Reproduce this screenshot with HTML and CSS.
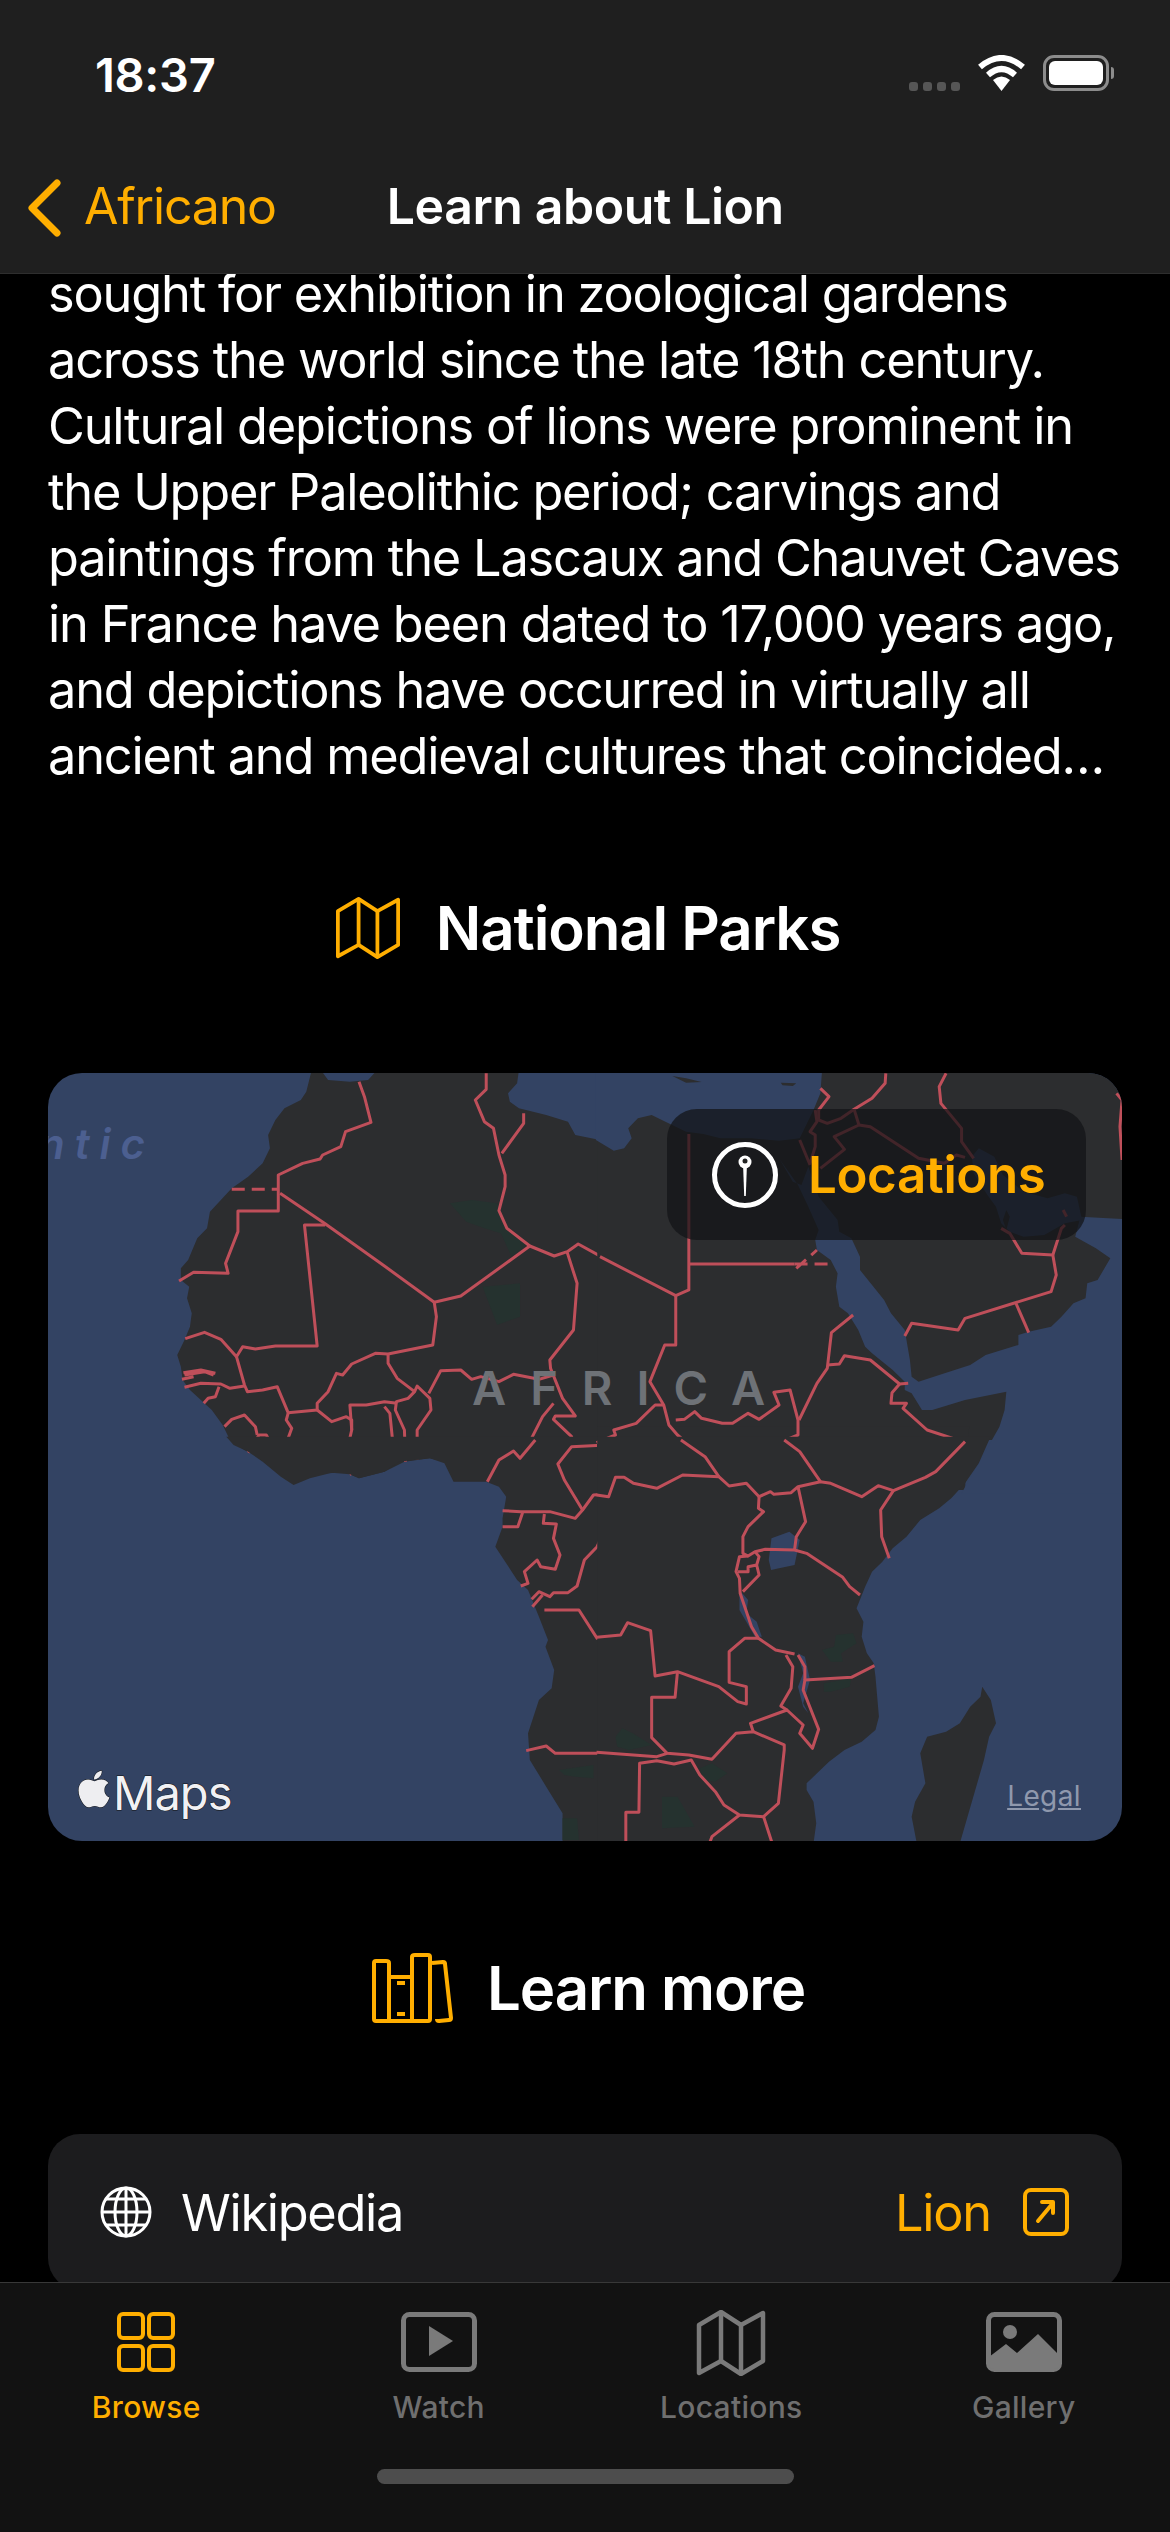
FILE: index.html
```html
<!DOCTYPE html>
<html lang="en">
<head>
<meta charset="utf-8">
<title>Learn about Lion</title>
<link rel="stylesheet" href="styles.css">
</head>
<body>
<div class="phone">
  <header class="topbar">
    <div class="status">
      <span class="time">18:37</span>
      <div class="status-icons">
        <div class="cell"><i></i><i></i><i></i><i></i></div>
        <svg class="wifi" viewBox="0 0 49 36"><path class="wifi-arc" d="M3 12Q24.500-6 46 12"/><path class="wifi-arc" d="M11 20Q24.500 8 38 20"/><path class="wifi-tip" d="M16 25Q24.500 18 33 25L24.500 36Z"/></svg>
        <div class="battery"><div class="battery-fill"></div></div>
      </div>
    </div>
    <nav class="navbar">
      <svg class="chevron" viewBox="0 0 34 58"><path d="M30 4L5 29L30 54"/></svg>
      <span class="back">Africano</span>
      <span class="title">Learn about Lion</span>
    </nav>
  </header>

  <main class="scroll">
    <p class="body-text">sought for exhibition in zoological gardens<br>across the world since the late 18th century.<br>Cultural depictions of lions were prominent in<br>the Upper Paleolithic period; carvings and<br>paintings from the Lascaux and Chauvet Caves<br>in France have been dated to 17,000 years ago,<br>and depictions have occurred in virtually all<br>ancient and medieval cultures that coincided…</p>

    <h2 class="section-head parks-head">
      <svg class="icon-map" viewBox="0 0 68 66"><path d="M2 15L24 2L44 15L66 3V51L44 64L24 51L2 63Z"/><path d="M24 2V51M44 15V64"/></svg>
      <span>National Parks</span>
    </h2>

    <section class="map">
      <svg class="map-svg" viewBox="48 1073 1074 768">
        <rect class="water" x="48" y="1073" width="1074" height="768"/>
        <!-- north west -->
        <g transform="translate(30 1060) scale(.36352 .33333)">
          <path class="land" d="M775 30L760 95L745 120L700 145L675 180L655 225L660 265L640 310L600 350L555 385L525 420L495 455L487 505L460 535L435 600L415 625L415 660L438 680L432 715L445 760L440 800L425 840L405 885L415 920L420 960L440 990L470 1020L500 1050L530 1095L550 1140L590 1170L640 1195L690 1225L725 1240L750 1255L800 1240L870 1238L905 1255L975 1235L1030 1205L1100 1195L1140 1205L1165 1260L1585 1260L1585 246L1568 240L1500 225L1480 185L1420 165L1345 145L1320 125L1315 100L1340 70L1345 30L955 30L930 60L880 65L820 60L800 30Z"/>
          <path class="park" d="M1155 430L1215 420L1285 430L1310 500L1365 555L1325 590L1295 520L1250 505L1200 485Z"/>
          <path class="park" d="M1245 680L1348 670L1348 770L1285 795Z"/>
          <path class="border" d="M905 65L920 110L938 187L868 215L855 260L805 285L798 297L750 310L683 345L683 453L572 453L572 515L538 610L545 640L450 637L410 663"/>
          <path class="border dash" d="M555 388L685 388"/>
          <path class="border" d="M688 400L810 490L975 618L1112 727L1185 708L1375 558L1312 505L1290 452L1307 380L1307 345L1290 285L1275 205L1250 185L1225 120L1255 88L1255 40"/>
          <path class="border" d="M1298 280L1358 190L1358 160"/>
          <path class="border" d="M812 495L755 495L790 858L675 858L620 867L585 860L568 890L525 838L480 817L427 836"/>
          <path class="border" d="M1112 727L1118 770L1108 855L985 882L950 880L885 912L860 945L843 940L820 995L790 1030L790 1050L710 1058L680 980L640 990L598 995L590 975L568 890"/>
          <path class="border" d="M1375 558L1442 588L1478 575L1508 552L1585 598"/>
          <path class="border" d="M1478 578L1505 670L1495 810L1430 900L1432 925L1465 1015L1500 1068L1445 1068L1440 1078L1490 1130L1495 1160L1585 1160"/>
          <path class="border" d="M1097 1000L1130 932L1185 930L1215 958L1240 950L1290 965L1330 943L1400 958L1440 945"/>
          <path class="border" d="M985 885L985 910L1010 955L1058 995L1065 978L1100 1015L1103 1050L1065 1110L1065 1198"/>
          <path class="border" d="M1058 995L1040 1015L1008 1025L1005 1050L1030 1110L1033 1205"/>
          <path class="border" d="M1010 1030L975 1025L925 1035L880 1035L885 1110L865 1205L885 1245"/>
          <path class="border" d="M975 1040L990 1060L1000 1170L1010 1205"/>
          <path class="border" d="M790 1050L830 1085L870 1070L885 1080L885 1110"/>
          <path class="border" d="M710 1060L705 1080L720 1105L705 1150L670 1165L650 1125L630 1125L600 1178"/>
          <path class="border" d="M535 1100L555 1078L590 1065L620 1100L625 1125"/>
          <path class="border" d="M690 1165L695 1195L725 1225L720 1260"/>
          <path class="border" d="M425 982L470 970L525 972L550 985L590 978"/>
          <path class="border" d="M418 958L450 950M422 938L470 930L510 940M425 945L480 935L505 945"/>
          <path class="border" d="M520 980L510 1010L490 1015L478 1030"/>
          <path class="border" d="M1440 1030L1410 1070L1375 1145L1345 1195L1330 1175L1290 1205L1260 1260"/>
          <path class="border" d="M1495 1160L1452 1210L1465 1260"/>
        </g>
        <!-- south west -->
        <g transform="translate(30 1440) scale(.36352 .33333)">
          <path class="land" d="M540-10L560 15L600 35L640 65L690 110L725 135L770 115L830 98L880 103L905 115L975 95L1015 65L1100 55L1140 70L1165 125L1255 125L1290 140L1310 170L1300 235L1300 260L1280 320L1340 420L1370 450L1400 530L1425 600L1418 620L1442 690L1435 745L1400 780L1370 880L1375 960L1420 1040L1465 1120L1465 1210L1585 1210L1585-10Z"/>
          <path class="park" d="M1455 990L1550 975L1550 1015L1500 1010L1470 1005Z"/>
          <path class="park" d="M1465 1135L1505 1135L1510 1200L1465 1200Z"/>
          <path class="border" d="M1300 212L1350 215L1430 215L1500 235L1520 210L1550 165L1585 162"/>
          <path class="border" d="M1520 210L1470 120L1452 72L1490 20L1585 15"/>
          <path class="border" d="M1258 125L1290 60L1330 33L1348 55L1390 0"/>
          <path class="border" d="M1355 218L1342 260L1300 260"/>
          <path class="border" d="M1415 222L1412 250L1448 252L1440 295L1458 345L1445 388L1405 380L1395 360L1360 395L1370 430L1350 438"/>
          <path class="border" d="M1380 478L1400 455L1430 470L1440 458L1480 458L1505 438L1525 360L1560 320L1585 260"/>
          <path class="border" d="M1382 500L1410 465"/>
          <path class="border" d="M1415 510L1510 510L1560 595L1585 595"/>
          <path class="border" d="M1365 932L1420 918L1445 940L1585 940"/>
        </g>
        <!-- north east -->
        <g transform="translate(600 1060) scale(.34435 .33333)">
          <path class="land" d="M-8 30H1532V1140H1070L-8 1262Z"/>
          <path class="land" d="M-8 1100H1072L1060 1290H-8Z"/>
          <path class="water" d="M-12 30L-12 240L40 272L70 265L92 235L82 205L110 175L150 165L190 185L250 215L300 222L350 235L440 235L520 242L580 235L620 150L640 100L645 30Z"/>
          <path class="water" d="M520 295L560 365L585 375L605 320L635 410L690 480L695 515L730 535L755 590L755 630L790 675L825 720L845 760L885 810L900 900L905 950L925 965L985 945L1075 915L1120 885L1215 855L1215 825L1245 815L1310 800L1340 770L1375 730L1410 715L1415 670L1445 660L1482 595L1440 565L1380 530L1395 470L1540 478L1540 1300L1050 1300L1070 1262L1100 1210L1160 1100L1175 1050L1180 995L1060 1020L965 1050L935 1050L905 1000L885 990L885 965L850 930L790 880L770 860L750 810L720 760L695 740L685 680L690 640L670 600L630 570L625 540L635 510L605 440L575 375L530 310Z"/>
          <path class="water" d="M1080 290L1100 265L1145 290L1170 345L1230 395L1300 415L1350 400L1385 410L1400 480L1350 490L1290 525L1230 530L1190 515L1165 490L1150 440L1125 405L1085 340Z"/>
          <path class="land" d="M210 48L250 55L295 66L250 68ZM525 68L570 70L560 78L530 76Z"/>
          <path class="land" d="M1170 480L1180 450L1190 470L1180 510Z"/>
          <path class="border" d="M258 222L258 690L220 707L0 590"/>
          <path class="border" d="M258 612L565 612"/>
          <path class="border dash" d="M565 612L675 612M570 625L630 570"/>
          <path class="border" d="M220 707L220 855L188 855L145 965L185 1035L200 1095L225 1125L305 1195L350 1262"/>
          <path class="border" d="M185 1035L160 1035L105 1090L40 1110L45 1125L-10 1148"/>
          <path class="border" d="M220 1080L245 1078L275 1055L295 1075L355 1090L385 1090L430 1060L462 1078L520 1035L505 997L552 990L575 1080L575 1125L540 1140L580 1170L640 1262"/>
          <path class="border" d="M578 1080L630 970L660 925L672 818L735 765"/>
          <path class="border" d="M660 915L695 912L710 887L785 900L870 972L895 970"/>
          <path class="border" d="M870 972L848 998L845 1030L890 1030L880 1045L950 1110L1060 1147L975 1235L880 1265"/>
          <path class="border" d="M640 85L665 110L635 150L635 180L660 190L700 175L738 148L790 115L828 70L830 40"/>
          <path class="border" d="M738 148L752 195L680 230L710 268L640 325"/>
          <path class="border" d="M752 195L785 200L925 295L1000 310L1035 285L1060 292"/>
          <path class="border" d="M1005 40L985 80L990 130L1050 205L1050 245L1085 295"/>
          <path class="border" d="M625 150L630 185L610 215L625 225L625 260L610 310M580 240L610 315"/>
          <path class="border" d="M1165 505L1190 520L1225 580L1315 585L1325 645L1310 695L1060 775L1040 810L905 790L885 828"/>
          <path class="border" d="M1315 585L1340 505L1350 495M1345 450L1355 470"/>
          <path class="border" d="M1208 730L1245 818"/>
          <path class="border" d="M1516 300L1510 200L1516 120L1500 100"/>
        </g>
        <!-- south east -->
        <g transform="translate(600 1440) scale(.34435 .33333)">
          <path class="land" d="M-8-10L1134-10L1130 0L1100 70L1060 130L1020 175L985 205L930 240L890 290L850 325L820 365L790 395L770 440L745 505L765 545L760 590L775 640L795 670L800 710L805 770L810 830L800 870L760 905L710 930L665 965L640 990L600 1030L600 1050L620 1085L628 1150L620 1210L-8 1210Z"/>
          <path class="land" d="M1110 740L1135 780L1150 850L1130 890L1115 960L1045 1210L920 1210L905 1130L915 1085L945 1030L930 940L950 890L1005 875L1045 850L1075 800L1105 770Z"/>
          <path class="water" d="M498 295L550 275L580 300L565 375L520 385L497 390L490 360Z"/>
          <path class="water" d="M405 450L430 480L425 520L455 545L470 590L450 590L425 545L405 510Z"/>
          <path class="water" d="M575 640L595 650L610 720L590 790L605 820L590 800L575 740L590 700Z"/>
          <path class="park" d="M645 630L680 620L685 585L735 580L745 610L700 640L705 665L670 665Z"/>
          <path class="park" d="M650 730L730 715L725 740L670 755L650 755Z"/>
          <path class="park" d="M45 890L65 865L95 880L150 915L85 930L50 920Z"/>
          <path class="park" d="M290 985L325 970L370 1000L335 1025L300 1020Z"/>
          <path class="park" d="M180 1070L225 1070L275 1160L180 1165Z"/>
          <path class="border" d="M-10 165L25 170L45 112L70 112L97 130L165 145L240 105L345 110L375 138L425 130L462 170L495 155L505 163L555 158L575 140L640 125L670 130L760 170L808 137L852 152L945 112L975 95L1060 5"/>
          <path class="border" d="M235 0L305 50L345 110M535 0L580 35L640 125"/>
          <path class="border" d="M575 140L597 245L570 290L565 330"/>
          <path class="border" d="M852 152L815 210L818 290L840 355"/>
          <path class="border" d="M462 170L460 205L475 215L430 260L415 290L415 340L430 348L450 335L480 328L565 330L600 340L705 412L725 440L755 465"/>
          <path class="border" d="M430 348L405 350L395 395L405 415L407 460L440 560L460 595L510 630L565 642"/>
          <path class="border" d="M450 335L462 350L455 375L430 380L430 395L400 395M455 375L462 405L415 455"/>
          <path class="border" d="M460 595L420 595L375 635L375 727L425 740L425 792L400 785L345 740L225 695L160 708L147 572L80 548L60 585L-10 592"/>
          <path class="border" d="M225 695L218 772L150 772L150 893L195 940L258 945L325 958L395 880L445 875L535 915L535 930L518 1090L475 1130L405 1125L360 1095L335 1055L290 1005L265 960L215 972L165 962L115 970L113 1117L75 1117L75 1210"/>
          <path class="border" d="M-10 937L165 950L195 940"/>
          <path class="border" d="M445 875L437 850L543 810L590 855L580 880L617 925L635 868L590 750L595 720L730 712L797 677"/>
          <path class="border" d="M595 720L595 680L575 645"/>
          <path class="border" d="M543 810L525 798L555 745L560 680L540 645"/>
          <path class="border" d="M405 1125L325 1190L318 1210M475 1130L500 1210"/>
        </g>
        <text class="ocean-label" x="155" y="1159" text-anchor="end">Atlantic</text>
        <text class="continent-label" x="472" y="1405">AFRICA</text>
      </svg>

      <div class="locations-btn">
        <svg class="pin" viewBox="0 0 68 68"><circle class="pin-ring" cx="34" cy="34" r="30.500"/><path class="pin-stem" d="M32 22H36L34.800 55H33.200Z"/><circle class="pin-head" cx="34" cy="21" r="6.500"/><circle class="pin-hole" cx="34" cy="20" r="2.500"/></svg>
        <span>Locations</span>
      </div>

      <div class="maps-mark">
        <svg class="apple" viewBox="0 0 384 512"><path d="M318.700 268.700c-.2-36.700 16.400-64.400 50-84.800-18.800-26.900-47.200-41.700-84.700-44.600-35.500-2.800-74.300 20.700-88.500 20.700-15 0-49.400-19.700-76.400-19.700C63.300 141.200 4 184.800 4 273.500q0 39.300 14.400 81.200c12.800 36.700 59 126.700 107.200 125.200 25.200-.6 43-17.900 75.800-17.900 31.800 0 48.300 17.900 76.400 17.900 48.600-.7 90.400-82.500 102.600-119.300-65.200-30.700-61.700-90-61.700-91.900zm-56.600-164.200c27.300-32.400 24.800-61.900 24-72.500-24.100 1.400-52 16.400-67.900 34.900-17.500 19.800-27.800 44.300-25.600 71.900 26.100 2 49.900-11.400 69.500-34.300z"/></svg>
        <span>Maps</span>
      </div>
      <span class="legal">Legal</span>
    </section>

    <h2 class="section-head learn-head">
      <svg class="icon-books" viewBox="0 0 81 71"><path d="M2 10Q2 8 4 8H14Q17 8 17 10V68H4Q2 68 2 66ZM17 24H40V68H17ZM40 4Q40 2 43 2H56Q58 2 58 4V66Q58 68 56 68H40ZM60 10L71 9Q73 9 73 11L79 65Q79 67 77 67L67 68Q65 68 65 66"/><path d="M25 30H33M25 61H33"/></svg>
      <span>Learn more</span>
    </h2>

    <section class="link-card">
      <svg class="globe" viewBox="0 0 52 52"><circle cx="26" cy="26" r="24"/><ellipse cx="26" cy="26" rx="11" ry="24"/><path d="M26 2V50M2 26H50M6 13H46M6 39H46"/></svg>
      <span class="link-name">Wikipedia</span>
      <span class="link-value">Lion</span>
      <svg class="external" viewBox="0 0 46 48"><rect x="2" y="2" width="42" height="44" rx="6"/><path d="M15 33L30 15M19 14H30V25"/></svg>
    </section>
  </main>

  <footer class="tabbar">
    <div class="tabs">
      <div class="tab active">
        <svg class="tab-icon" viewBox="0 0 76 60"><rect x="11" y="2" width="24" height="24" rx="4"/><rect x="41" y="2" width="24" height="24" rx="4"/><rect x="11" y="34" width="24" height="24" rx="4"/><rect x="41" y="34" width="24" height="24" rx="4"/></svg>
        <span>Browse</span>
      </div>
      <div class="tab">
        <svg class="tab-icon" viewBox="0 0 76 60"><rect x="2.500" y="2.500" width="71" height="55" rx="6"/><path class="tab-fill" d="M28 14L52 29L28 44Z"/></svg>
        <span>Watch</span>
      </div>
      <div class="tab">
        <svg class="tab-icon tab-map" viewBox="0 0 68 66"><path d="M2 15L24 2L44 15L66 3V51L44 64L24 51L2 63Z"/><path d="M24 2V51M44 15V64"/></svg>
        <span>Locations</span>
      </div>
      <div class="tab">
        <svg class="tab-icon" viewBox="0 0 76 60"><rect x="2.500" y="2.500" width="71" height="55" rx="6"/><circle class="tab-fill" cx="24" cy="20" r="7"/><path class="tab-fill" d="M3 45L20 32L31 41L52 22L73 43V52Q73 57 68 57H8Q3 57 3 52Z"/></svg>
        <span>Gallery</span>
      </div>
    </div>
    <div class="home-bar"></div>
  </footer>
</div>
</body>
</html>
```
FILE: styles.css
```css
* { box-sizing: border-box; }
html, body { margin: 0; padding: 0; background: #000; }
body { font-family: Inter, "Noto Sans", sans-serif; color: #fff; }

.phone {
  width: 1170px;
  height: 2532px;
  display: flex;
  flex-direction: column;
  overflow: hidden;
  background: #000;
}

/* top bar */
.topbar {
  flex: 0 0 274px;
  background: #1f1f1f;
  border-bottom: 1px solid #2e2e2e;
  position: relative;
  z-index: 2;
}
.status {
  height: 148px;
  padding: 49px 61px 0 95px;
  display: flex;
  justify-content: space-between;
  align-items: flex-start;
}
.time { font-size: 47px; font-weight: 600; line-height: 52px; letter-spacing: -.3px; }
.status-icons { display: flex; align-items: flex-start; padding-top: 6px; }
.cell { display: flex; gap: 5px; margin: 27px 17px 0 0; }
.cell i { width: 9px; height: 9px; border-radius: 3px; background: #565656; }
.wifi { width: 49px; height: 36px; margin-right: 17px; }
.wifi-arc { fill: none; stroke: #fff; stroke-width: 6; }
.wifi-tip { fill: #fff; }
.battery {
  width: 66px;
  height: 36px;
  border: 3px solid #8c8c8c;
  border-radius: 11px;
  padding: 3px;
  position: relative;
}
.battery::after {
  content: "";
  position: absolute;
  right: -8px;
  top: 9px;
  width: 3px;
  height: 12px;
  border-radius: 0 3px 3px 0;
  background: #8c8c8c;
}
.battery-fill { width: 100%; height: 100%; background: #fff; border-radius: 6px; }

.navbar { height: 125px; display: flex; align-items: flex-start; padding: 31px 0 0 27px; }
.chevron { width: 34px; height: 58px; fill: none; stroke: #ffae00; stroke-width: 7; stroke-linecap: round; stroke-linejoin: round; }
.back { font-size: 50px; line-height: 60px; color: #ffae00; margin: -3px 0 0 23px; letter-spacing: -1.2px; }
.title { font-size: 50px; line-height: 60px; font-weight: 600; margin: -3px 0 0 111px; letter-spacing: -.45px; }

/* scrolling content */
.scroll { flex: 1 1 0; min-height: 0; overflow: hidden; }
.body-text {
  margin: -13px 0 0;
  padding-left: 48px;
  font-size: 50.500px;
  line-height: 66px;
  white-space: nowrap;
  letter-spacing: -1.200px;
}
.section-head {
  height: 88px;
  margin: 0;
  display: flex;
  align-items: center;
  justify-content: center;
  font-size: 60px;
  font-weight: 600;
  letter-spacing: -1.100px;
  line-height: 88px;
}
.parks-head { margin: 95px 0 101px; gap: 36px; padding-left: 6px; }
.learn-head { margin: 103px 0 102px; gap: 34px; padding-left: 7px; }
.icon-map { width: 64px; height: 64px; fill: none; stroke: #ffae00; stroke-width: 4; stroke-linejoin: round; }
.icon-books { width: 81px; height: 71px; fill: none; stroke: #ffae00; stroke-width: 4; stroke-linejoin: round; }

/* map */
.map {
  position: relative;
  width: 1074px;
  height: 768px;
  margin-left: 48px;
  border-radius: 34px;
  overflow: hidden;
}
.map-svg { display: block; width: 1074px; height: 768px; }
.water { fill: #334363; }
.land { fill: #2c2d2f; }
.park { fill: #25322f; }
.border { fill: none; stroke: #bf4f5a; stroke-width: 3; vector-effect: non-scaling-stroke; stroke-linejoin: round; }
.dash { stroke-dasharray: 13 7; }
.ocean-label { font-family: Inter, sans-serif; font-size: 42px; font-style: italic; font-weight: 600; letter-spacing: 10px; fill: #4c5f90; }
.continent-label { font-family: Inter, sans-serif; font-size: 47px; font-weight: 600; letter-spacing: 24px; fill: #6e7277; }

.locations-btn {
  position: absolute;
  left: 619px;
  top: 36px;
  width: 419px;
  height: 131px;
  border-radius: 30px;
  background: rgba(18, 19, 22, .72);
  display: flex;
  align-items: center;
  padding-left: 44px;
  gap: 29px;
  color: #ffae00;
  font-size: 51px;
  font-weight: 600;
  letter-spacing: -.4px;
}
.pin { width: 68px; height: 68px; }
.pin-ring { fill: none; stroke: #fff; stroke-width: 5; }
.pin-stem, .pin-head { fill: #fff; }
.pin-hole { fill: #222; }

.maps-mark {
  position: absolute;
  left: 30px;
  bottom: 20px;
  display: flex;
  align-items: center;
  gap: 3px;
  color: #f1f1f4;
  font-size: 47px;
  line-height: 56px;
  letter-spacing: -1px;
  -webkit-text-stroke: 1px #111;
  paint-order: stroke fill;
}
.apple { width: 32px; height: 42px; fill: #eeeef1; stroke: #111; stroke-width: 12; margin-top: -8px; }
.legal {
  position: absolute;
  right: 41px;
  bottom: 28px;
  font-size: 28px;
  line-height: 34px;
  letter-spacing: .4px;
  color: #8f98ad;
  text-decoration: underline;
}

/* link card */
.link-card {
  width: 1074px;
  height: 156px;
  margin-left: 48px;
  padding: 0 53px 0 52px;
  border-radius: 32px;
  background: #1c1c1e;
  display: flex;
  align-items: center;
  font-size: 50.500px;
}
.globe { width: 52px; height: 52px; fill: none; stroke: #fff; stroke-width: 3; }
.link-name { margin-left: 29px; letter-spacing: -1.300px; }
.link-value { margin-left: auto; color: #ffae00; letter-spacing: -1.200px; }
.external { width: 46px; height: 48px; margin-left: 32px; fill: none; stroke: #ffae00; stroke-width: 4; stroke-linecap: round; stroke-linejoin: round; }

/* tab bar */
.tabbar {
  flex: 0 0 250px;
  background: #121212;
  border-top: 1px solid #383838;
  position: relative;
  z-index: 2;
}
.tabs { display: grid; grid-template-columns: repeat(4, 1fr); padding-top: 29px; }
.tab {
  display: flex;
  flex-direction: column;
  align-items: center;
  gap: 17px;
  font-size: 30px;
  line-height: 36px;
  font-weight: 500;
  color: #6f6f6f;
  letter-spacing: .3px;
}
.tab.active { color: #ffae00; }
.tab-icon { width: 76px; height: 60px; fill: none; stroke: #7a7a7a; stroke-width: 5; stroke-linejoin: round; }
.tab-map { height: 66px; margin: -2px 0 -4px; stroke-width: 4.500; }
.tab.active .tab-icon { stroke: #ffae00; stroke-width: 4; }
.tab-fill { fill: #7a7a7a; stroke: none; }
.home-bar {
  width: 417px;
  height: 15px;
  border-radius: 8px;
  background: #4d4d4d;
  margin: 44px auto 0;
}
```
